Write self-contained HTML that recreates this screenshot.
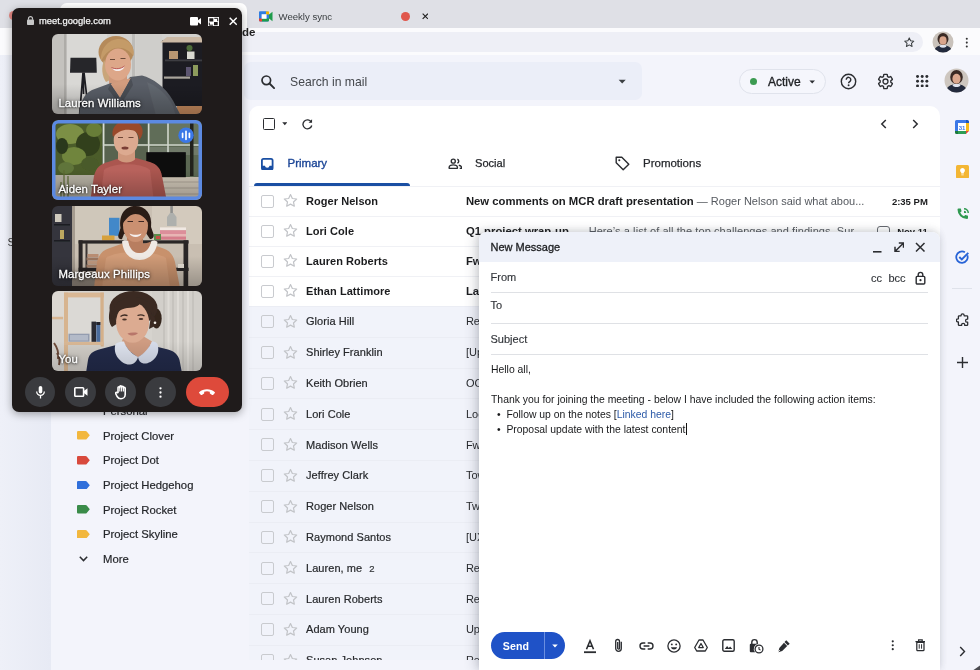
<!DOCTYPE html>
<html lang="en">
<head>
<meta charset="utf-8">
<title>Inbox</title>
<style>
*{box-sizing:border-box;margin:0;padding:0}
html,body{width:980px;height:670px;overflow:hidden;background:#f3f4fb;font-family:"Liberation Sans",sans-serif;color:#1f1f1f}
.abs{position:absolute}
#root{position:relative;width:980px;height:670px;overflow:hidden;will-change:transform;border-radius:.01px}
/* chrome */
#tabstrip{left:0;top:0;width:980px;height:28px;background:#dfe0e6}
#urlrow{left:0;top:28px;width:980px;height:27px;background:#fbfbfd}
#omni{left:100px;top:32.300px;width:822.500px;height:19.700px;background:#eeeff6;border-radius:10px}
#tabtxt{left:278.5px;top:10px;font-size:9.6px;line-height:14px;color:#3c4043;white-space:nowrap}
/* gmail header */
#ghead{left:0;top:55px;width:980px;height:51px;background:#f3f4fb}
#search{left:244px;top:62px;width:398px;height:37.500px;border-radius:7px;background:#ebeef8}
#searchtxt{left:290px;top:75px;font-size:12.2px;line-height:15px;color:#44474c;white-space:nowrap}
#active{left:739px;top:69px;width:87px;height:25px;border:1px solid #e0e3ec;border-radius:13px;background:#f5f6fc}
#activetxt{left:768px;top:74.5px;font-size:12px;line-height:14px;color:#1f2124;-webkit-text-stroke:.35px #1f2124}
/* left strip & sidebar */
#lstrip{left:0;top:55px;width:51px;height:615px;background:linear-gradient(90deg,#eef0f8,#e7eaf4)}
#sidebar{left:51px;top:55px;width:196px;height:615px;background:#f3f4fb}
.lbl{left:103px;font-size:11.3px;-webkit-text-stroke:.2px #25272b;color:#25272b;line-height:14px;white-space:nowrap}
.tag{left:77px;width:13px;height:10px}
/* main card */
#card{left:248.5px;top:106px;width:691.800px;height:564px;background:#fff;border-radius:10px 10px 0 0;overflow:hidden}
.tabtxt{font-size:11.5px;color:#26282c;top:155.800px;line-height:14px;white-space:nowrap;-webkit-text-stroke:.25px #26282c}
.row{left:248.5px;width:691.800px;border-top:1px solid #f0f1f5}
.row.u{background:#fff;height:30px}
.row.r{background:#f1f3fa;height:30.8px;border-top:1px solid #ebedf4}
.row .cb{position:absolute;left:12px;top:50%;margin-top:-6.600px;width:13px;height:13px;border:1.400px solid #c9cbcf;border-radius:2px}
.row svg.st{position:absolute;left:33px;top:50%;margin-top:-9.200px}
.row .nm{position:absolute;left:57.500px;-webkit-text-stroke:.2px #27292c;top:50%;margin-top:-7.5px;font-size:11px;line-height:15px;white-space:nowrap;color:#27292c;letter-spacing:.05px}
.row .nm i{font-style:normal;font-size:9.5px;margin-left:4px;color:#3c4043}
.row .sj{position:absolute;left:217.400px;top:50%;margin-top:-7.5px;font-size:11px;line-height:15px;white-space:nowrap;color:#27292c}
.row .tm{position:absolute;right:12.5px;top:50%;margin-top:-7px;font-size:9.5px;line-height:14px;white-space:nowrap;color:#444}
.row.u .nm,.row.u .sj b,.row.u .tm{font-weight:bold;color:#1b1c1e;-webkit-text-stroke:0}
.row.u .sj b{font-size:11.3px}
.row .sj span{color:#55595f;font-size:11px}
/* compose */
#compose{left:479px;top:232px;width:461.300px;height:438px;background:#fff;border-radius:8px 8px 0 0;box-shadow:-4px 0 12px rgba(60,64,80,.2),0 -1px 7px rgba(60,64,80,.14);overflow:hidden}
#chead{left:0;top:0;width:462px;height:30px;background:#eef1f9}
.ctx{left:11.5px;font-size:11px;color:#33363b;-webkit-text-stroke:.15px #33363b;line-height:14px;white-space:nowrap}
.cline{left:12px;width:437px;height:1px;background:#dfe1e5}
.body{left:12px;font-size:10.4px;color:#17181a;line-height:14px;white-space:nowrap}
/* right rail */
#rail{left:940.300px;top:106px;width:39.700px;height:564px;background:#f3f4fb}
/* meet */
#meet{left:11.5px;top:8.3px;width:230.6px;height:404.2px;background:#1f1b1b;border-radius:7px;box-shadow:0 2px 8px rgba(0,0,0,.35);overflow:hidden}
.tile{left:40.5px;width:150px;height:80px;border-radius:6px;overflow:hidden}
.tname{position:absolute;left:6.400px;bottom:4.400px;font-size:11.400px;line-height:14px;-webkit-text-stroke:.3px #fff;color:#fff;text-shadow:0 0 4px rgba(0,0,0,.75),0 0 2px rgba(0,0,0,.6),0 1px 2px rgba(0,0,0,.5);white-space:nowrap;letter-spacing:.1px}
.cbtn{top:369px;width:32px;height:32px;border-radius:16px;background:#393b3f}
</style>
</head>
<body>
<div id="root">
<!--CHROME-->
<div id="tabstrip" class="abs"></div>
<div class="abs" style="left:60px;top:3px;width:187px;height:26px;background:#fff;border-radius:7px 7px 0 0"></div>
<div class="abs" style="left:8.500px;top:10.500px;width:9px;height:9px;border-radius:5px;background:#e8645a;opacity:.7"></div>
<div id="urlrow" class="abs"></div>
<div id="omni" class="abs"></div>
<div class="abs" style="left:242px;top:25px;font-size:11.5px;font-weight:bold;color:#222;line-height:14px">de</div>
<svg class="abs" style="left:259px;top:9.800px" width="14" height="13" viewBox="0 0 14 13"><rect x="0" y="1.5" width="10" height="10" rx="1.5" fill="#2f7de1"/><path d="M0 1.5h7v3H0z" fill="#2f7de1"/><path d="M7 1.5h3v3H7z" fill="#f0b400"/><path d="M0 8.5h3v3H1.5A1.5 1.5 0 010 10z" fill="#e94335"/><path d="M3 8.5h7v1.5a1.500 1.500 0 01-1.500 1.500H3z" fill="#1e9c4b"/><rect x="2.600" y="4.200" width="5" height="4.600" fill="#fff"/><path d="M10 4.500l3.500-2.800v9.600L10 8.500z" fill="#1e9c4b"/></svg>
<div id="tabtxt" class="abs">Weekly sync</div>
<div class="abs" style="left:401px;top:12px;width:9.200px;height:9.200px;border-radius:5px;background:#e0574c"></div>
<svg class="abs" style="left:421.500px;top:13.300px" width="6.600" height="6.600" viewBox="0 0 8 8"><path d="M.8.800l6.400 6.400M7.200.800L.8 7.200" stroke="#222" stroke-width="1.400"/></svg>
<svg class="abs" style="left:902.500px;top:36px" width="12.500" height="12.500" viewBox="0 0 24 24"><path d="M12 3.600l2.600 5.600 6.100.7-4.500 4.200 1.200 6-5.400-3-5.400 3 1.200-6-4.500-4.200 6.100-.7z" fill="none" stroke="#3c4043" stroke-width="2" stroke-linejoin="round"/></svg>
<svg class="abs" style="left:932px;top:31px" width="22" height="22" viewBox="0 0 22 22"><defs><clipPath id="av1"><circle cx="11" cy="11" r="10.500"/></clipPath></defs><g clip-path="url(#av1)"><rect width="22" height="22" fill="#c9c2bb"/><ellipse cx="11" cy="8" rx="5.500" ry="6" fill="#3a2a25"/><ellipse cx="11" cy="9.500" rx="3.600" ry="4.300" fill="#d9a58c"/><path d="M2 22c0-6 4-7.500 9-7.500s9 1.500 9 7.500z" fill="#232a3d"/><path d="M7.500 15.500c1 .8 2.200 1.200 3.500 1.200s2.500-.4 3.500-1.200l-1-1.500h-5z" fill="#dfe3ee"/></g></svg>
<svg class="abs" style="left:964.700px;top:37px" width="3.600" height="11.200" viewBox="0 0 4 13"><circle cx="2" cy="2" r="1.200" fill="#333"/><circle cx="2" cy="6.500" r="1.200" fill="#333"/><circle cx="2" cy="11" r="1.200" fill="#333"/></svg>
<!--GHEAD-->
<div id="ghead" class="abs"></div>
<div id="lstrip" class="abs"></div>
<div id="sidebar" class="abs"></div>
<div id="search" class="abs"></div>
<svg class="abs" style="left:260px;top:74px" width="16" height="16" viewBox="0 0 16 16"><circle cx="6.300" cy="6.300" r="4.300" fill="none" stroke="#2b2d31" stroke-width="1.700"/><path d="M9.500 9.500l4.600 4.600" stroke="#2b2d31" stroke-width="1.900" stroke-linecap="round"/></svg>
<div id="searchtxt" class="abs">Search in mail</div>
<svg class="abs" style="left:618px;top:78.800px" width="8.400" height="5.200" viewBox="0 0 10 6"><path d="M.8.800h8.400L5 5.300z" fill="#3c4043"/></svg>
<div id="active" class="abs"></div>
<div class="abs" style="left:750px;top:78px;width:7px;height:7px;border-radius:4px;background:#3c9b52"></div>
<div id="activetxt" class="abs">Active</div>
<svg class="abs" style="left:809px;top:79.800px" width="6.400" height="4" viewBox="0 0 8 5"><path d="M.5.500h7L4 4.500z" fill="#2b2d31"/></svg>
<svg class="abs" style="left:840px;top:73px" width="17" height="17" viewBox="0 0 17 17"><circle cx="8.500" cy="8.500" r="7.200" fill="none" stroke="#2b2d31" stroke-width="1.400"/><path d="M6.300 6.800a2.250 2.250 0 114.400.400c0 1.300-2.100 1.500-2.100 3" fill="none" stroke="#2b2d31" stroke-width="1.400"/><circle cx="8.600" cy="12.300" r=".95" fill="#2b2d31"/></svg>
<svg class="abs" style="left:877px;top:72.500px" width="17" height="17" viewBox="0 0 24 24"><path d="M19.430 12.980c.04-.32.070-.64.070-.98s-.03-.66-.07-.98l2.110-1.650a.5.500 0 00.120-.64l-2-3.460a.5.500 0 00-.61-.22l-2.490 1a7.300 7.300 0 00-1.690-.98l-.38-2.650A.49.490 0 0014 2h-4a.49.490 0 00-.49.420l-.38 2.650c-.61.250-1.170.59-1.690.98l-2.490-1a.5.500 0 00-.61.220l-2 3.460a.5.500 0 00.120.64l2.110 1.650c-.04.320-.07.650-.07.980s.03.660.07.980l-2.110 1.650a.5.500 0 00-.12.640l2 3.460c.12.220.39.300.61.220l2.490-1c.52.400 1.080.73 1.690.98l.38 2.650c.03.240.24.420.49.420h4c.25 0 .46-.18.490-.42l.38-2.650a7.300 7.300 0 001.690-.98l2.490 1c.23.090.49 0 .61-.22l2-3.460a.5.500 0 00-.12-.64zM12 15.500a3.500 3.500 0 110-7 3.500 3.500 0 010 7z" fill="none" stroke="#2b2d31" stroke-width="1.900" stroke-linejoin="round"/></svg>
<svg class="abs" style="left:916.200px;top:75px" width="12.400" height="12.400" viewBox="0 0 13 13"><g fill="#2b2d31"><circle cx="1.6" cy="1.6" r="1.550"/><circle cx="6.5" cy="1.6" r="1.550"/><circle cx="11.4" cy="1.6" r="1.550"/><circle cx="1.6" cy="6.5" r="1.550"/><circle cx="6.5" cy="6.5" r="1.550"/><circle cx="11.4" cy="6.5" r="1.550"/><circle cx="1.6" cy="11.4" r="1.550"/><circle cx="6.5" cy="11.4" r="1.550"/><circle cx="11.4" cy="11.4" r="1.550"/></g></svg>
<svg class="abs" style="left:944px;top:68px" width="25" height="25" viewBox="0 0 25 25"><defs><clipPath id="av2"><circle cx="12.500" cy="12.500" r="12"/></clipPath></defs><g clip-path="url(#av2)"><rect width="25" height="25" fill="#cdc6bf"/><ellipse cx="12.500" cy="9" rx="6.300" ry="7" fill="#3a2a25"/><ellipse cx="12.500" cy="10.800" rx="4.100" ry="5" fill="#dba88f"/><path d="M2 25c0-7 4.500-8.500 10.500-8.500S23 18 23 25z" fill="#232a3d"/><path d="M8.500 17.700c1.100.9 2.500 1.400 4 1.400s2.900-.5 4-1.400l-1.200-1.700h-5.600z" fill="#dfe3ee"/></g></svg>
<!--SIDEBAR-->
<div class="abs" style="left:7.500px;top:235px;font-size:11px;color:#333;line-height:14px">S</div>
<div class="abs lbl" style="top:403.7px">Personal</div>
<svg class="abs" style="left:76.600px;top:431.2px" width="13" height="8.600" viewBox="0 0 13.5 10" preserveAspectRatio="none"><path d="M1.200 0h7.600a1.600 1.600 0 011.300.700L13.300 5l-3.200 4.300a1.600 1.600 0 01-1.300.700H1.200A1.200 1.200 0 010 8.800V1.200A1.200 1.200 0 011.200 0z" fill="#f2b73e"/></svg>
<div class="abs lbl" style="top:428.5px">Project Clover</div>
<svg class="abs" style="left:76.600px;top:456px" width="13" height="8.600" viewBox="0 0 13.5 10" preserveAspectRatio="none"><path d="M1.200 0h7.600a1.600 1.600 0 011.300.700L13.300 5l-3.200 4.300a1.600 1.600 0 01-1.300.700H1.200A1.200 1.200 0 010 8.800V1.200A1.200 1.200 0 011.200 0z" fill="#d8493c"/></svg>
<div class="abs lbl" style="top:453.3px">Project Dot</div>
<svg class="abs" style="left:76.600px;top:480.6px" width="13" height="8.600" viewBox="0 0 13.5 10" preserveAspectRatio="none"><path d="M1.200 0h7.600a1.600 1.600 0 011.300.700L13.300 5l-3.200 4.300a1.600 1.600 0 01-1.300.700H1.200A1.200 1.200 0 010 8.800V1.200A1.200 1.200 0 011.200 0z" fill="#2f6fdb"/></svg>
<div class="abs lbl" style="top:477.9px">Project Hedgehog</div>
<svg class="abs" style="left:76.600px;top:505.2px" width="13" height="8.600" viewBox="0 0 13.5 10" preserveAspectRatio="none"><path d="M1.200 0h7.600a1.600 1.600 0 011.300.700L13.300 5l-3.200 4.300a1.600 1.600 0 01-1.300.700H1.200A1.200 1.200 0 010 8.800V1.200A1.200 1.200 0 011.200 0z" fill="#3a8b49"/></svg>
<div class="abs lbl" style="top:502.5px">Project Rocket</div>
<svg class="abs" style="left:76.600px;top:529.9px" width="13" height="8.600" viewBox="0 0 13.5 10" preserveAspectRatio="none"><path d="M1.200 0h7.600a1.600 1.600 0 011.300.700L13.300 5l-3.200 4.300a1.600 1.600 0 01-1.300.700H1.200A1.200 1.200 0 010 8.800V1.200A1.200 1.200 0 011.200 0z" fill="#f2b73e"/></svg>
<div class="abs lbl" style="top:527.2px">Project Skyline</div>
<svg class="abs" style="left:78.5px;top:555.8px" width="9" height="6" viewBox="0 0 9 6"><path d="M.8.800L4.500 4.600 8.200.800" fill="none" stroke="#2b2d31" stroke-width="1.500"/></svg>
<div class="abs lbl" style="top:551.8px">More</div>
<!--CARD-->
<div id="card" class="abs"></div>
<div class="abs" style="left:262.500px;top:118.200px;width:12px;height:12px;border:1.700px solid #2b2d31;border-radius:1.500px"></div>
<svg class="abs" style="left:281.500px;top:122.300px" width="5.600" height="3.400" viewBox="0 0 7 4"><path d="M.3.300h6.400L3.500 3.800z" fill="#2b2d31"/></svg>
<svg class="abs" style="left:301.300px;top:117.800px" width="12.600" height="12.600" viewBox="0 0 13 13"><path d="M10.600 4.200A4.600 4.600 0 1011.100 7.700" fill="none" stroke="#2b2d31" stroke-width="1.400"/><path d="M11.400 1.300v3.600H7.800z" fill="#2b2d31"/></svg>
<svg class="abs" style="left:880px;top:119px" width="7" height="10" viewBox="0 0 7 10"><path d="M5.800 1L1.800 5l4 4" fill="none" stroke="#2b2d31" stroke-width="1.500"/></svg>
<svg class="abs" style="left:912px;top:119px" width="7" height="10" viewBox="0 0 7 10"><path d="M1.200 1l4 4-4 4" fill="none" stroke="#2b2d31" stroke-width="1.500"/></svg>
<svg class="abs" style="left:261px;top:157.500px" width="12.500" height="12.500" viewBox="0 0 12.500 12.500"><rect x=".9" y=".9" width="10.700" height="10.700" rx="1.600" fill="none" stroke="#1a4fa3" stroke-width="1.800"/><path d="M1 7.800h2.900a2.400 2.400 0 004.700 0h2.900v3.700H1z" fill="#1a4fa3"/></svg>
<div class="abs tabtxt" style="left:287.500px;color:#1b4596;-webkit-text-stroke:.35px #1b4596">Primary</div>
<div class="abs" style="left:254px;top:183px;width:155.500px;height:3px;background:#1a4fa3;border-radius:3px 3px 0 0"></div>
<svg class="abs" style="left:447.600px;top:158.200px" width="14.600" height="11.400" viewBox="0 0 16 13"><circle cx="5.700" cy="3.600" r="2.300" fill="none" stroke="#2b2d31" stroke-width="1.600"/><path d="M1 11.800v-1.300c0-1.700 3-2.600 4.700-2.600s4.700.9 4.700 2.600v1.300z" fill="none" stroke="#2b2d31" stroke-width="1.600" stroke-linejoin="round"/><path d="M10.300 1.400a2.300 2.300 0 010 4.400M12 8.300c1.500.4 3 1.100 3 2.300v1.200h-2" fill="none" stroke="#2b2d31" stroke-width="1.600"/></svg>
<div class="abs tabtxt" style="left:475px;font-size:11.100px">Social</div>
<svg class="abs" style="left:615px;top:156px" width="15" height="15" viewBox="0 0 15 15"><path d="M1.200 1.200h5.600l7 7-5.600 5.600-7-7z" fill="none" stroke="#2b2d31" stroke-width="1.400" stroke-linejoin="round"/><circle cx="4.300" cy="4.300" r="1.050" fill="#2b2d31"/></svg>
<div class="abs tabtxt" style="left:643px">Promotions</div>
<!--ROWS-->
<div class="abs row u" style="top:186.0px"><div class="cb"></div><svg class="st" width="17" height="17" viewBox="0 0 24 24"><path d="M12 3.6l2.6 5.6 6.1.7-4.5 4.2 1.2 6-5.4-3-5.4 3 1.2-6-4.5-4.2 6.1-.7z" fill="none" stroke="#c2c4c8" stroke-width="1.700" stroke-linejoin="round"/></svg><div class="nm">Roger Nelson</div><div class="sj"><b>New comments on MCR draft presentation</b><span> — Roger Nelson said what abou...</span></div><div class="tm">2:35 PM</div></div>
<div class="abs row u" style="top:216.0px"><div class="cb"></div><svg class="st" width="17" height="17" viewBox="0 0 24 24"><path d="M12 3.6l2.6 5.6 6.1.7-4.5 4.2 1.2 6-5.4-3-5.4 3 1.2-6-4.5-4.2 6.1-.7z" fill="none" stroke="#c2c4c8" stroke-width="1.700" stroke-linejoin="round"/></svg><div class="nm">Lori Cole</div><div class="sj"><b>Q1 project wrap-up</b><span style="letter-spacing:.07px;margin-left:2.500px"> — Here’s a list of all the top challenges and findings. Sur...</span></div><div class="tm">Nov 11</div><div style="position:absolute;left:628px;top:9px;width:13.500px;height:10px;border:1.300px solid #666a70;border-radius:3px"></div></div>
<div class="abs row u" style="top:246.0px"><div class="cb"></div><svg class="st" width="17" height="17" viewBox="0 0 24 24"><path d="M12 3.6l2.6 5.6 6.1.7-4.5 4.2 1.2 6-5.4-3-5.4 3 1.2-6-4.5-4.2 6.1-.7z" fill="none" stroke="#c2c4c8" stroke-width="1.700" stroke-linejoin="round"/></svg><div class="nm">Lauren Roberts</div><div class="sj"><b>Fwd: Client resources for Q3</b></div><div class="tm">Nov 8</div></div>
<div class="abs row u" style="top:276.0px"><div class="cb"></div><svg class="st" width="17" height="17" viewBox="0 0 24 24"><path d="M12 3.6l2.6 5.6 6.1.7-4.5 4.2 1.2 6-5.4-3-5.4 3 1.2-6-4.5-4.2 6.1-.7z" fill="none" stroke="#c2c4c8" stroke-width="1.700" stroke-linejoin="round"/></svg><div class="nm">Ethan Lattimore</div><div class="sj"><b>Last year’s EMEA strategy deck</b></div><div class="tm">Nov 8</div></div>
<div class="abs row r" style="top:306.0px"><div class="cb"></div><svg class="st" width="17" height="17" viewBox="0 0 24 24"><path d="M12 3.6l2.6 5.6 6.1.7-4.5 4.2 1.2 6-5.4-3-5.4 3 1.2-6-4.5-4.2 6.1-.7z" fill="none" stroke="#c2c4c8" stroke-width="1.700" stroke-linejoin="round"/></svg><div class="nm">Gloria Hill</div><div class="sj">Revised organic search numbers</div><div class="tm">Nov 7</div></div>
<div class="abs row r" style="top:336.8px"><div class="cb"></div><svg class="st" width="17" height="17" viewBox="0 0 24 24"><path d="M12 3.6l2.6 5.6 6.1.7-4.5 4.2 1.2 6-5.4-3-5.4 3 1.2-6-4.5-4.2 6.1-.7z" fill="none" stroke="#c2c4c8" stroke-width="1.700" stroke-linejoin="round"/></svg><div class="nm">Shirley Franklin</div><div class="sj">[Updated invitation] Midwest retail sales check-in</div><div class="tm">Nov 7</div></div>
<div class="abs row r" style="top:367.6px"><div class="cb"></div><svg class="st" width="17" height="17" viewBox="0 0 24 24"><path d="M12 3.6l2.6 5.6 6.1.7-4.5 4.2 1.2 6-5.4-3-5.4 3 1.2-6-4.5-4.2 6.1-.7z" fill="none" stroke="#c2c4c8" stroke-width="1.700" stroke-linejoin="round"/></svg><div class="nm">Keith Obrien</div><div class="sj">OOO next week</div><div class="tm">Nov 7</div></div>
<div class="abs row r" style="top:398.4px"><div class="cb"></div><svg class="st" width="17" height="17" viewBox="0 0 24 24"><path d="M12 3.6l2.6 5.6 6.1.7-4.5 4.2 1.2 6-5.4-3-5.4 3 1.2-6-4.5-4.2 6.1-.7z" fill="none" stroke="#c2c4c8" stroke-width="1.700" stroke-linejoin="round"/></svg><div class="nm">Lori Cole</div><div class="sj">Logo redesign ideas</div><div class="tm">Nov 7</div></div>
<div class="abs row r" style="top:429.2px"><div class="cb"></div><svg class="st" width="17" height="17" viewBox="0 0 24 24"><path d="M12 3.6l2.6 5.6 6.1.7-4.5 4.2 1.2 6-5.4-3-5.4 3 1.2-6-4.5-4.2 6.1-.7z" fill="none" stroke="#c2c4c8" stroke-width="1.700" stroke-linejoin="round"/></svg><div class="nm">Madison Wells</div><div class="sj">Fwd: Feedback on the new signup experience</div><div class="tm">Nov 6</div></div>
<div class="abs row r" style="top:460.0px"><div class="cb"></div><svg class="st" width="17" height="17" viewBox="0 0 24 24"><path d="M12 3.6l2.6 5.6 6.1.7-4.5 4.2 1.2 6-5.4-3-5.4 3 1.2-6-4.5-4.2 6.1-.7z" fill="none" stroke="#c2c4c8" stroke-width="1.700" stroke-linejoin="round"/></svg><div class="nm">Jeffrey Clark</div><div class="sj">Town hall on the upcoming merger</div><div class="tm">Nov 6</div></div>
<div class="abs row r" style="top:490.8px"><div class="cb"></div><svg class="st" width="17" height="17" viewBox="0 0 24 24"><path d="M12 3.6l2.6 5.6 6.1.7-4.5 4.2 1.2 6-5.4-3-5.4 3 1.2-6-4.5-4.2 6.1-.7z" fill="none" stroke="#c2c4c8" stroke-width="1.700" stroke-linejoin="round"/></svg><div class="nm">Roger Nelson</div><div class="sj">Two pics from the conference</div><div class="tm">Nov 6</div></div>
<div class="abs row r" style="top:521.6px"><div class="cb"></div><svg class="st" width="17" height="17" viewBox="0 0 24 24"><path d="M12 3.6l2.6 5.6 6.1.7-4.5 4.2 1.2 6-5.4-3-5.4 3 1.2-6-4.5-4.2 6.1-.7z" fill="none" stroke="#c2c4c8" stroke-width="1.700" stroke-linejoin="round"/></svg><div class="nm">Raymond Santos</div><div class="sj">[UX] Special delivery! This month’s research report!</div><div class="tm">Nov 5</div></div>
<div class="abs row r" style="top:552.4px"><div class="cb"></div><svg class="st" width="17" height="17" viewBox="0 0 24 24"><path d="M12 3.6l2.6 5.6 6.1.7-4.5 4.2 1.2 6-5.4-3-5.4 3 1.2-6-4.5-4.2 6.1-.7z" fill="none" stroke="#c2c4c8" stroke-width="1.700" stroke-linejoin="round"/></svg><div class="nm">Lauren, me <i>2</i></div><div class="sj">Re: Project Skylight 1-pager</div><div class="tm">Nov 5</div></div>
<div class="abs row r" style="top:583.2px"><div class="cb"></div><svg class="st" width="17" height="17" viewBox="0 0 24 24"><path d="M12 3.6l2.6 5.6 6.1.7-4.5 4.2 1.2 6-5.4-3-5.4 3 1.2-6-4.5-4.2 6.1-.7z" fill="none" stroke="#c2c4c8" stroke-width="1.700" stroke-linejoin="round"/></svg><div class="nm">Lauren Roberts</div><div class="sj">Re: Corp strategy slides?</div><div class="tm">Nov 5</div></div>
<div class="abs row r" style="top:614.0px"><div class="cb"></div><svg class="st" width="17" height="17" viewBox="0 0 24 24"><path d="M12 3.6l2.6 5.6 6.1.7-4.5 4.2 1.2 6-5.4-3-5.4 3 1.2-6-4.5-4.2 6.1-.7z" fill="none" stroke="#c2c4c8" stroke-width="1.700" stroke-linejoin="round"/></svg><div class="nm">Adam Young</div><div class="sj">Updated expense report template</div><div class="tm">Nov 4</div></div>
<div class="abs row r" style="top:644.8px"><div class="cb"></div><svg class="st" width="17" height="17" viewBox="0 0 24 24"><path d="M12 3.6l2.6 5.6 6.1.7-4.5 4.2 1.2 6-5.4-3-5.4 3 1.2-6-4.5-4.2 6.1-.7z" fill="none" stroke="#c2c4c8" stroke-width="1.700" stroke-linejoin="round"/></svg><div class="nm">Susan Johnson</div><div class="sj">Referrals from Sydney - need input</div><div class="tm">Nov 4</div></div>
<!--/ROWS-->
<div class="abs" style="left:51px;top:660.300px;width:890px;height:10px;background:#f3f4fb"></div>
<!--RAIL-->
<div id="rail" class="abs"></div>
<svg class="abs" style="left:955.3px;top:120.400px" width="14" height="14" viewBox="0 0 14 14"><rect x="0" y="0" width="14" height="14" rx="1.500" fill="#fff"/><path d="M0 1.500A1.500 1.500 0 011.500 0H11v3H3v8H0z" fill="#3b78e7"/><path d="M11 0h1.500A1.500 1.500 0 0114 1.500V3h-3z" fill="#1a56c4"/><path d="M11 3h3v8h-3z" fill="#f5ba18"/><path d="M3 11h8v3H3z" fill="#2e9d54"/><path d="M0 11h3v3H1.500A1.500 1.500 0 010 12.500z" fill="#1c7a3d"/><path d="M11 11h3l-3 3z" fill="#e24b3c"/><text x="7" y="9.600" font-family="Liberation Sans,sans-serif" font-size="6" font-weight="bold" fill="#3b78e7" text-anchor="middle">31</text></svg>
<svg class="abs" style="left:955.8px;top:164.600px" width="13" height="13.5" viewBox="0 0 13 13.5"><rect width="13" height="13.500" rx="1.500" fill="#f3b634"/><path d="M6.500 3a2.500 2.500 0 00-1.300 4.600v1h2.600v-1A2.500 2.500 0 006.500 3zM5.300 9.400h2.400v.9H5.300z" fill="#fff"/></svg>
<svg class="abs" style="left:955.5px;top:206.5px" width="14" height="14" viewBox="0 0 14 14"><path d="M2.500 1.500h2.300l.8 2.800-1.400 1.200a8 8 0 003.800 3.800l1.200-1.400 2.800.8v2.300a1 1 0 01-1 1A9.500 9.500 0 011.500 2.500a1 1 0 011-1z" fill="#2f9950"/><path d="M8 1a5 5 0 015 5h-1.500A3.500 3.500 0 008 2.500zM8 3.700A2.300 2.300 0 0110.300 6H8z" fill="#2f9950"/></svg>
<svg class="abs" style="left:955.3px;top:249.600px" width="14.5" height="14.5" viewBox="0 0 14.5 14.5"><path d="M12.300 5.200a5.700 5.700 0 11-2.400-2.900" fill="none" stroke="#2763d6" stroke-width="1.800"/><path d="M4.300 7l2.500 2.500L13.300 2.800" fill="none" stroke="#2763d6" stroke-width="1.900"/></svg>
<div class="abs" style="left:952px;top:288px;width:20px;height:1px;background:#dfe2ea"></div>
<svg class="abs" style="left:955.500px;top:313px" width="13.800" height="13.800" viewBox="0 0 15 15"><path d="M5.500 2.600a1.700 1.700 0 013.400 0v.500h3a.8.800 0 01.800.800v2.700h-.6a1.700 1.700 0 000 3.400h.6v2.700a.8.800 0 01-.8.800H9.500v-.6a1.700 1.700 0 00-3.400 0v.6H3.400a.8.800 0 01-.8-.8v-3h-.500a1.700 1.700 0 010-3.400h.500V3.900a.8.800 0 01.800-.8h2.100z" fill="none" stroke="#2b2d31" stroke-width="1.400" stroke-linejoin="round"/></svg>
<svg class="abs" style="left:957px;top:356.800px" width="11" height="11" viewBox="0 0 11 11"><path d="M5.500 0v11M0 5.500h11" stroke="#2b2d31" stroke-width="1.400"/></svg>
<svg class="abs" style="left:959px;top:646px" width="7" height="11" viewBox="0 0 7 11"><path d="M1.200 1l4.300 4.500-4.300 4.500" fill="none" stroke="#2b2d31" stroke-width="1.400"/></svg>
<svg class="abs" style="left:972px;top:664px" width="8" height="6" viewBox="0 0 8 6"><path d="M8 1.500L1.500 6H8z" fill="#4a4a4f"/></svg>
<!--COMPOSE-->
<div id="compose" class="abs">
<div id="chead" class="abs"></div>
<div class="abs ctx" style="top:8px;color:#202225;-webkit-text-stroke:.3px #202225">New Message</div>
<svg class="abs" style="left:394px;top:18.5px" width="8.5" height="2" viewBox="0 0 8.5 2"><rect width="8.5" height="1.6" fill="#2b2d31"/></svg>
<svg class="abs" style="left:414.5px;top:9.5px" width="10.5" height="10.5" viewBox="0 0 10.5 10.5"><path d="M1.2 9.300L9.300 1.200M4.800 1h4.700v4.700M5.700 9.500H1V4.800" fill="none" stroke="#2b2d31" stroke-width="1.500"/></svg>
<svg class="abs" style="left:436px;top:9.5px" width="10.5" height="10.5" viewBox="0 0 10.5 10.5"><path d="M1 1l8.500 8.500M9.500 1L1 9.500" stroke="#2b2d31" stroke-width="1.500"/></svg>
<div class="abs ctx" style="top:38px">From</div>
<div class="abs ctx" style="left:392px;top:38.500px">cc</div>
<div class="abs ctx" style="left:409.500px;top:38.500px">bcc</div>
<svg class="abs" style="left:436px;top:38.5px" width="11" height="14" viewBox="0 0 11 14"><rect x="1.2" y="5.400" width="8.600" height="7.600" rx="1" fill="none" stroke="#2b2d31" stroke-width="1.400"/><path d="M3.200 5.400V3.700a2.300 2.300 0 014.600 0v1.700" fill="none" stroke="#2b2d31" stroke-width="1.400"/><circle cx="5.500" cy="9.200" r="1.100" fill="#2b2d31"/></svg>
<div class="abs cline" style="top:60px"></div>
<div class="abs ctx" style="top:65.700px">To</div>
<div class="abs cline" style="top:91px"></div>
<div class="abs ctx" style="top:99.500px">Subject</div>
<div class="abs cline" style="top:122px"></div>
<div class="abs body" style="top:130.500px">Hello all,</div>
<div class="abs body" style="top:160.500px">Thank you for joining the meeting - below I have included the following action items:</div>
<div class="abs body" style="left:18px;top:175.500px">•&nbsp; Follow up on the notes [<span style="color:#2c5aa8">Linked here</span>]</div>
<div class="abs body" style="left:18px;top:190.500px">•&nbsp; Proposal update with the latest content<span style="display:inline-block;width:1px;height:12px;background:#111;vertical-align:-2px;margin-left:1px"></span></div>
<div class="abs" style="left:11.5px;top:399.800px;width:74px;height:27.300px;border-radius:14px;background:#1f52c7"></div>
<div class="abs" style="left:64.5px;top:399.800px;width:1px;height:27.300px;background:#6a8ee0"></div>
<div class="abs" style="left:23.800px;top:406.500px;font-size:10.600px;line-height:14px;font-weight:bold;color:#fff;letter-spacing:.1px">Send</div>
<svg class="abs" style="left:72.5px;top:412px" width="6" height="4" viewBox="0 0 6 4"><path d="M.2.400h5.600L3 3.600z" fill="#fff"/></svg>
<svg class="abs" style="left:105px;top:405.6px" width="12" height="16" viewBox="0 0 12 16"><path d="M2.500 11.200L6 2.800l3.500 8.400M3.700 8.300h4.600" fill="none" stroke="#2b2d31" stroke-width="1.600"/><rect x="0" y="13.300" width="12" height="1.800" fill="#2b2d31"/></svg>
<svg class="abs" style="left:134.5px;top:406.1px" width="9" height="15" viewBox="0 0 9 15"><path d="M7.300 3.800v6.700a2.800 2.800 0 01-5.600 0V3.400a1.900 1.900 0 013.800 0v6.800a.9.900 0 01-1.800 0V4" fill="none" stroke="#2b2d31" stroke-width="1.300"/></svg>
<svg class="abs" style="left:159.5px;top:409.6px" width="15" height="8" viewBox="0 0 15 8"><path d="M6.300 1H4a3 3 0 000 6h2.300M8.700 1H11a3 3 0 010 6H8.700M4.600 4h5.800" fill="none" stroke="#2b2d31" stroke-width="1.400"/></svg>
<svg class="abs" style="left:188px;top:406.6px" width="14" height="14" viewBox="0 0 14 14"><circle cx="7" cy="7" r="6.100" fill="none" stroke="#2b2d31" stroke-width="1.300"/><circle cx="4.800" cy="5.400" r=".95" fill="#2b2d31"/><circle cx="9.200" cy="5.400" r=".95" fill="#2b2d31"/><path d="M3.800 8.200a3.400 3.400 0 006.400 0z" fill="#2b2d31"/></svg>
<svg class="abs" style="left:215px;top:407.1px" width="14" height="13" viewBox="0 0 14 13"><path d="M5 1h4l4.300 7.500-2 3.500H2.700l-2-3.500z" fill="none" stroke="#2b2d31" stroke-width="1.300" stroke-linejoin="round"/><path d="M7 4.500L9.300 8.600H4.700z" fill="none" stroke="#2b2d31" stroke-width="1.200" stroke-linejoin="round"/></svg>
<svg class="abs" style="left:243px;top:407.1px" width="13" height="13" viewBox="0 0 13 13"><rect x=".8" y=".8" width="11.400" height="11.400" rx="1.500" fill="none" stroke="#2b2d31" stroke-width="1.400"/><path d="M2.800 10l2.300-3 1.700 2.100 1.300-1.500 2.200 2.400z" fill="#2b2d31"/></svg>
<svg class="abs" style="left:270px;top:405.6px" width="15" height="16" viewBox="0 0 15 16"><path d="M2.800 6V4.300a2.700 2.700 0 015.400 0V6" fill="none" stroke="#2b2d31" stroke-width="1.400"/><path d="M1.800 5.800h7.600a5 5 0 00-3.300 8.400H1.800a1 1 0 01-1-1V6.800a1 1 0 011-1z" fill="#2b2d31"/><circle cx="10" cy="11" r="3.900" fill="none" stroke="#2b2d31" stroke-width="1.300"/><path d="M10 9v2.200l1.500.9" fill="none" stroke="#2b2d31" stroke-width="1.100"/></svg>
<svg class="abs" style="left:298px;top:406.6px" width="14" height="14" viewBox="0 0 14 14"><path d="M9.300 1.300l3.400 3.400-1.800 1.800L7.500 3.100z" fill="#2b2d31"/><path d="M7 3.800l3.200 3.200-5 5-3.900 1.200 1-4.100z" fill="#2b2d31"/><path d="M1 13l2-2" stroke="#fff" stroke-width=".8"/></svg>
<svg class="abs" style="left:411.700px;top:408.300px" width="3.500" height="10.500" viewBox="0 0 4 12"><circle cx="2" cy="1.500" r="1.250" fill="#2b2d31"/><circle cx="2" cy="6" r="1.250" fill="#2b2d31"/><circle cx="2" cy="10.500" r="1.250" fill="#2b2d31"/></svg>
<svg class="abs" style="left:435.500px;top:407.200px" width="10.800" height="12.600" viewBox="0 0 12 14"><path d="M2 3.800h8v8.200a1 1 0 01-1 1H3a1 1 0 01-1-1z" fill="none" stroke="#2b2d31" stroke-width="1.400"/><path d="M.5 2.800h11M4 2.500V1h4v1.500" fill="none" stroke="#2b2d31" stroke-width="1.400"/><path d="M4.700 5.800v5M7.300 5.800v5" stroke="#2b2d31" stroke-width="1.100"/></svg>
</div>
<!--MEET-->
<div id="meet" class="abs">
<svg class="abs" style="left:15.5px;top:8.2px" width="7" height="9" viewBox="0 0 7 9"><rect x="0" y="3.600" width="7" height="5.400" rx=".8" fill="#c8c8c8"/><path d="M1.500 3.800V2.600a2 2 0 014 0v1.200" fill="none" stroke="#c8c8c8" stroke-width="1.200"/></svg>
<div class="abs" style="left:27.5px;top:6.2px;font-size:9.400px;line-height:14px;color:#f4f4f4;-webkit-text-stroke:.25px #f4f4f4;white-space:nowrap">meet.google.com</div>
<svg class="abs" style="left:178.3px;top:9.2px" width="11.5" height="8.5" viewBox="0 0 11.5 8.5"><rect x="0" y="0" width="8" height="8.500" rx="1" fill="#fff"/><path d="M8 3.200L11.500.600v7.300L8 5.300z" fill="#fff"/></svg>
<svg class="abs" style="left:196.5px;top:8.7px" width="11" height="9.5" viewBox="0 0 11 9.5"><path d="M0 0h11v9.500H0z" fill="#fff"/><path d="M1.300 1.300h4v3.200h-4zM6 5h3.700v3.200H6z" fill="#1f1b1b"/><path d="M6.300 1.300h3.400v2.900M1.300 5.600v2.600h3.800" fill="none" stroke="#1f1b1b" stroke-width="1"/></svg>
<svg class="abs" style="left:217.2px;top:9.2px" width="8.5" height="8.5" viewBox="0 0 8.5 8.5"><path d="M.7.700l7.100 7.100M7.800.700L.7 7.800" stroke="#fff" stroke-width="1.500"/></svg>
<!--TILES-->
<div class="abs tile" style="top:25.7px">
<svg width="150" height="80" viewBox="0 0 150 80" style="display:block">
<defs><filter id="bl" x="-5%" y="-5%" width="110%" height="110%"><feGaussianBlur stdDeviation="0.55"/></filter>
<linearGradient id="shade" x1="0" y1="0" x2="0" y2="1"><stop offset="0" stop-color="#000" stop-opacity="0"/><stop offset="1" stop-color="#000" stop-opacity=".24"/></linearGradient></defs>
<g filter="url(#bl)">
<rect x="-2" y="-2" width="154" height="84" fill="#d2d1ce"/>
<rect x="-2" y="-2" width="14" height="84" fill="#c4c2be"/>
<rect x="12" y="-2" width="2.500" height="84" fill="#aeaca8"/>
<rect x="15" y="-2" width="40" height="84" fill="#d9d8d5"/>
<rect x="80" y="-2" width="3" height="52" fill="#bdbcb9"/>
<rect x="84" y="-2" width="26" height="60" fill="#cfcecb"/>
<path d="M18.500 23.800h25.800l.5 15h-26.800z" fill="#25252a"/>
<path d="M31 38.500L27.500 82M32 38.500L37 82M31.500 38.500V60" stroke="#1c1c20" stroke-width="1.700" fill="none"/>
<rect x="110.500" y="6" width="42" height="66" fill="#1d1d20"/>
<path d="M108 8.500l7-5.500h37v5.500z" fill="#cbb9a5"/>
<rect x="113" y="25.500" width="37" height="1.800" fill="#3d3d42"/>
<rect x="112" y="42.500" width="26" height="2.200" fill="#a9a49c"/>
<rect x="117" y="17" width="9" height="8" fill="#b89672"/>
<rect x="135" y="17.500" width="7.500" height="7.500" fill="#d9d9d2"/>
<circle cx="137.500" cy="14" r="3" fill="#4e6d3a"/>
<rect x="141" y="31" width="5" height="11" fill="#8c9b5b"/>
<rect x="134" y="33" width="5" height="9" fill="#5b5470"/>
<rect x="125" y="72" width="27" height="10" fill="#c98d61"/>
<ellipse cx="64" cy="18" rx="17.500" ry="16" fill="#b58a5a"/>
<path d="M52 26c-3 8-2 16 2 22l8-4z" fill="#c9a57a"/>
<path d="M57 40h18v16H57z" fill="#cf997b"/>
<path d="M27 82c1-14 5-22 13-26l19-7c5 5 13 3 19-6l12-1.500c11 3 23 11 31 25l8 15.500z" fill="#5a5f67"/>
<path d="M58.500 50l9.500 14 11-20z" fill="#d29c7e"/><path d="M58.500 50l9.500 14-3 3-9-12zM79 44l-11 20 3 3 10-16z" fill="#4b4f57"/>
<path d="M95 48c10 4 20 12 26 24l3 10h-20z" fill="#62676f"/>
<ellipse cx="66" cy="30.500" rx="13" ry="16" fill="#dda789"/>
<path d="M49 27c-1-13 8-22 18-22 10 0 16 7 14.500 17-5-7-13-10-21-7-5 2-8.500 6-11.500 12z" fill="#c49b68"/>
<path d="M59.500 33.500c4 2 9.500 1.500 13-1.500-1 6-10 7-13 1.500z" fill="#f6eeee"/>
<path d="M59.500 33.500c4 2 9.500 1.500 13-1.500" stroke="#b8544f" stroke-width="1" fill="none"/>
<path d="M58 25.500h5M68.500 24.500h5" stroke="#6b4a38" stroke-width="1.200"/>
</g>
<rect y="50" width="150" height="30" fill="url(#shade)"/>
</svg>
<div class="tname">Lauren Williams</div>
</div>

<div class="abs tile" style="top:111.7px">
<svg width="150" height="80" viewBox="0 0 150 80" style="display:block">
<g filter="url(#bl)">
<rect x="-2" y="-2" width="154" height="84" fill="#5c6753"/>
<rect x="50" y="-2" width="102" height="28" fill="#66735a"/>
<rect x="53" y="2" width="42" height="22" fill="#4d5a46"/>
<rect x="98" y="2" width="17" height="22" fill="#606d58"/>
<rect x="118" y="2" width="20" height="22" fill="#67745f"/>
<rect x="53" y="27" width="42" height="26" fill="#59634f"/>
<rect x="98" y="27" width="50" height="8" fill="#6f7a69"/>
<rect x="-2" y="-2" width="52" height="60" fill="#4c5c2a"/>
<ellipse cx="18" cy="14" rx="14" ry="10" fill="#7b8f45"/>
<ellipse cx="36" cy="24" rx="12" ry="12" fill="#33401d"/>
<ellipse cx="22" cy="36" rx="12" ry="9" fill="#6f853c"/>
<ellipse cx="42" cy="10" rx="8" ry="7" fill="#687d38"/>
<ellipse cx="10" cy="26" rx="6" ry="8" fill="#2c381a"/>
<ellipse cx="38" cy="44" rx="9" ry="7" fill="#4a5a29"/>
<ellipse cx="14" cy="48" rx="8" ry="6" fill="#61753a"/>
<path d="M51.600 0V54M96.700 0V34M116 0V34" stroke="#d6dbd2" stroke-width="1.500"/>
<path d="M51 25h100" stroke="#cfd5cb" stroke-width="1.600"/>
<rect x="138" y="2" width="3.500" height="54" fill="#20221f"/>
<rect x="-2" y="55" width="50" height="27" fill="#b4afa1"/>
<path d="M12 50v30M16 56v24M9 62v18" stroke="#5b6a33" stroke-width="1.200"/>
<rect x="96" y="57" width="56" height="25" fill="#cdc4b5"/>
<path d="M110 62h40M110 68h40M110 74h40" stroke="#aaa194" stroke-width="1"/>
<rect x="94.300" y="32.200" width="39.500" height="25" fill="#090909"/>
<path d="M38 82l4-26c2-8 6-12 14-14l12-4h16l14 4c7 2 11 7 12 14l5 26z" fill="#ab5650"/>
<path d="M52 50c8-7 36-8 46 0l4 32H48z" fill="#b8625b"/>
<path d="M66 28h17v11.500c-4 4-13 4-17 0z" fill="#cf987d"/>
<ellipse cx="74" cy="20.500" rx="12.300" ry="15" fill="#dcaa90"/>
<path d="M61 17c-2.500-10 5-16.500 15-16.500 9 0 16 4.500 14.500 13-1 3-1.500 5-3.500 6 0-5-3-9.500-8.500-9.500-6.500-1-12 1-17.500 7z" fill="#99482a"/>
<ellipse cx="73" cy="28" rx="3.500" ry="1.500" fill="#7a3d35"/>
<path d="M66 17.500h5M76.500 17.500h5" stroke="#6d4434" stroke-width="1.100"/>
</g>
<rect y="50" width="150" height="30" fill="url(#shade)"/>
<rect x="1.750" y="1.750" width="146.500" height="76.500" rx="4.500" fill="none" stroke="#5c8ae2" stroke-width="3.500"/>
<circle cx="134" cy="15.300" r="7.700" fill="#3b78e7"/>
<path d="M130.600 13.300v4M134 11.300v8M137.400 13.300v4" stroke="#fff" stroke-width="1.700" stroke-linecap="round"/>
</svg>
<div class="tname">Aiden Tayler</div>
</div>

<div class="abs tile" style="top:197.400px">
<svg width="150" height="80" viewBox="0 0 150 80" style="display:block">
<g filter="url(#bl)">
<rect x="-2" y="-2" width="154" height="84" fill="#c9bfb2"/>
<rect x="20" y="-2" width="38" height="40" fill="#cfc7ba"/>
<rect x="100" y="-2" width="52" height="40" fill="#d3cabd"/>
<rect x="-2" y="-2" width="22" height="84" fill="#35363c"/>
<rect x="3" y="8" width="6.500" height="8" fill="#cfcabd"/>
<rect x="2" y="18" width="16" height="1.500" fill="#1d1d20"/>
<rect x="8" y="24" width="4" height="9" fill="#bda860"/>
<rect x="2" y="34" width="16" height="1.500" fill="#1d1d20"/>
<rect x="20" y="-2" width="3" height="84" fill="#a49b8f"/>
<rect x="57" y="11.800" width="10.500" height="18" fill="#4288c9"/>
<rect x="50" y="29.500" width="12.500" height="5" fill="#d6a13e"/>
<rect x="118.300" y="-2" width="2.600" height="10" fill="#8f908e"/>
<path d="M115 20v-9l3-4h3.500l3 4v9z" fill="#aeb0ad"/>
<rect x="108" y="21.400" width="26" height="2.800" fill="#f0e8e2"/>
<rect x="108" y="24.200" width="26" height="3.800" fill="#dc8e9a"/>
<rect x="109" y="28" width="25" height="2.500" fill="#e9b4b4"/>
<rect x="108" y="30.500" width="26" height="3.200" fill="#d67d8b"/>
<rect x="102" y="28" width="7" height="6" fill="#5c8b4b"/>
<rect x="104" y="30" width="4" height="3" fill="#c74d45"/>
<rect x="26.600" y="34.300" width="110" height="3.300" fill="#2a2625"/>
<rect x="26.600" y="34.300" width="4" height="48" fill="#2a2625"/>
<rect x="131.500" y="34.300" width="4.700" height="48" fill="#2a2625"/>
<rect x="33.500" y="37" width="2" height="45" fill="#3b3533"/>
<rect x="26.600" y="61.700" width="110" height="3.300" fill="#2a2625"/>
<rect x="35.500" y="48" width="11" height="3" fill="#b88d72"/>
<rect x="34.500" y="51.500" width="12" height="3" fill="#9c7760"/>
<rect x="35.500" y="55" width="11" height="3" fill="#c09a80"/>
<rect x="34.500" y="58.500" width="12" height="3" fill="#a8826a"/>
<rect x="20" y="66" width="30" height="16" fill="#8d8378"/>
<rect x="126" y="58" width="6" height="4" fill="#e8e1d6"/>
<path d="M68.500 22c-2-14 5-22 15-22 10 0 17 8 15.500 21l2.500 7c1 3-1 5-3.500 5l-4-6-22 1-2 5c-2.500 1-4.500-1.500-3.500-4.500z" fill="#2a1c18"/>
<path d="M75 30h16v11H75z" fill="#b87e61"/>
<path d="M42 82l3-26c2-8 6-12 13-14l14-5c6 12 18 12 24 0l14 5c7 2 11 6 13 14l5 26z" fill="#c8916c"/>
<path d="M54 52c10-8 48-8 60 0l4 30H50z" fill="#d09b77"/>
<path d="M70 35.500c2.500-2 5-1.500 6.500 0 1 7 5 11.500 11 11.500s10-4.500 11.500-11.500c2-1.500 4.500-1.500 6.500.500-1 10-8 18-18 18s-16.500-8-17.500-18.500z" fill="#efe9e4"/>
<path d="M76.500 35.500c1 7 5 11.500 11 11.500s10-4.500 11.500-11.500c-6 3-16 3-22.500 0z" fill="#b87e61"/>
<ellipse cx="83.500" cy="19.500" rx="12.500" ry="16.500" fill="#ca9071"/>
<path d="M70.500 18c-1-11 5-17 13-17s14 6 13 16c-4-6-8-9-13-9s-9 4-13 10z" fill="#2a1c18"/>
<path d="M77.500 27.500c3.500 1.800 8.500 1.800 12 0-1 4.500-10.500 4.500-12 0z" fill="#f5efee"/>
<path d="M75.500 15.500h5.500M86.500 15.500H92" stroke="#3b2620" stroke-width="1.200"/>
</g>
<rect y="50" width="150" height="30" fill="url(#shade)"/>
</svg>
<div class="tname">Margeaux Phillips</div>
</div>

<div class="abs tile" style="top:283px;height:79.300px">
<svg width="150" height="80" viewBox="0 0 150 80" style="display:block">
<g filter="url(#bl)">
<rect x="-2" y="-2" width="154" height="84" fill="#d6d3ce"/>
<rect x="100" y="-2" width="52" height="84" fill="#d2cfca"/>
<path d="M112 0v82M121 0v82M131 0v82M141 0v82" stroke="#c6c3be" stroke-width="2"/>
<path d="M116.500 0v82M126 0v82M136 0v82" stroke="#dedbd6" stroke-width="2"/>
<rect x="16" y="6" width="32.500" height="45" fill="#dbd9d5"/>
<rect x="-2" y="-2" width="14" height="28" fill="#dcd8d2"/>
<rect x="-2" y="25.800" width="13" height="2.500" fill="#d8b692"/>
<rect x="12" y="1.600" width="40" height="4.800" fill="#d9b794"/>
<rect x="12" y="1.600" width="4" height="82" fill="#d7b48f"/>
<rect x="48.400" y="1.600" width="3.300" height="54" fill="#d4b08a"/>
<rect x="12" y="50.800" width="39.700" height="3.300" fill="#d9b794"/>
<rect x="16" y="54.100" width="32.500" height="28" fill="#d1cdc7"/>
<rect x="39.500" y="30.600" width="4.600" height="20.200" fill="#2a2a30"/>
<rect x="44.300" y="31" width="4" height="19.800" fill="#4c6c9c"/>
<rect x="44.300" y="31" width="4" height="3" fill="#23232a"/>
<rect x="16.500" y="42.700" width="21" height="8" fill="#949db0"/>
<rect x="18" y="44" width="18" height="5.500" fill="#b3bac8"/>
<path d="M2 52c3 4 5 10 4 16M5 62c2 3 3 8 2 12" stroke="#6d4b3a" stroke-width="2" fill="none"/>
<ellipse cx="104.500" cy="27.500" rx="5.200" ry="10" fill="#36261f"/>
<ellipse cx="81.500" cy="17" rx="24" ry="17" fill="#3a2a22"/>
<path d="M58 18c-2 8-1 14 2 18l6-4zM100 18l5 16-8 4z" fill="#3a2a22"/>
<path d="M71 44h20v16H71z" fill="#cf9c82"/>
<path d="M34 82l2-13c1-6 5-9 11-10.500l19-5h30l20 5c6 1.500 10 5 11.500 10.500l2.500 13z" fill="#232b49"/>
<path d="M70 50l2-5h19l9 5.500-5 10-9 6-8-6z" fill="#cf9c82"/><path d="M63.500 53c1.500-1.500 5-2.500 8.500-2.500 2 6 7 12 14 15.500-1 4-3.500 7-8 7.500-4 .5-9-2.500-12-6.500-3-4-4-9-2.500-14z" fill="#dde2ee"/><path d="M86 66c6-3 11-9 14-15.500 2 0 4 .5 5.500 2.500 1.500 5 1 10-2 13.500-3 4-8 6.500-12 6-3-.5-5-3-5.500-6.500z" fill="#d6dceb"/>
<ellipse cx="80.600" cy="31.500" rx="16.500" ry="20.200" fill="#dcab91"/>
<path d="M60 28c-1-12 8-22 21-22 12 0 22 8 21 20-3-6-8-11-14-13-3 3-8 4-13 4-6 1-12 5-15 11z" fill="#3a2a22"/>
<path d="M68.500 25.500c2-1.500 5-1.800 7-.8M85.500 24.500c2.500-1 5-.8 7 .5" stroke="#3b2a22" stroke-width="1.300" fill="none"/>
<ellipse cx="72.500" cy="28.500" rx="2.300" ry="1" fill="#4a3228"/>
<ellipse cx="89" cy="28" rx="2.300" ry="1" fill="#4a3228"/>
<path d="M75.500 42.500c3-1.200 7-1.200 10.500-.5-2 3-8 3.500-10.500.5z" fill="#b8766a"/>
<circle cx="103" cy="31.800" r="1.300" fill="#f4f0ea"/>
</g>
<rect y="50" width="150" height="30" fill="url(#shade)" opacity=".6"/>
</svg>
<div class="tname">You</div>
</div>
<!--/TILES-->
<div class="abs" style="left:13.3px;top:368.6px;width:30.600px;height:30.600px;border-radius:16px;background:#3a3b3f"></div>
<div class="abs" style="left:53.7px;top:368.6px;width:30.600px;height:30.600px;border-radius:16px;background:#3a3b3f"></div>
<div class="abs" style="left:93.9px;top:368.6px;width:30.600px;height:30.600px;border-radius:16px;background:#3a3b3f"></div>
<div class="abs" style="left:133.8px;top:368.6px;width:30.600px;height:30.600px;border-radius:16px;background:#3a3b3f"></div>
<div class="abs" style="left:174.4px;top:369.2px;width:42.800px;height:29.400px;border-radius:15px;background:#de4a3b"></div>
<svg class="abs" style="left:24.1px;top:377.4px" width="9" height="13" viewBox="0 0 9 13"><rect x="2.700" y="0" width="3.600" height="7.600" rx="1.800" fill="#fff"/><path d="M.7 5.600a3.800 3.800 0 007.600 0M4.500 9.400V12.500" fill="none" stroke="#fff" stroke-width="1.300"/></svg>
<svg class="abs" style="left:62.0px;top:378.9px" width="14" height="10" viewBox="0 0 14 10"><rect x=".8" y=".8" width="8.800" height="8.400" rx=".8" fill="none" stroke="#fff" stroke-width="1.600"/><path d="M9.800 4L13.500 1.200v7.600L9.800 6z" fill="#fff"/></svg>
<svg class="abs" style="left:103.2px;top:376.4px" width="12" height="15" viewBox="0 0 12 15"><path d="M3 7.500V2.700a.9.900 0 011.800 0V1.800a.9.900 0 011.800 0v.500a.9.900 0 011.800 0v1a.9.900 0 011.800 0v6.200a4.300 4.300 0 01-4.300 4.300c-2 0-3-1-3.800-2.300L.7 8.600a.9.900 0 011.500-.9z" fill="none" stroke="#fff" stroke-width="1.600" stroke-linejoin="round"/><path d="M4.800 3v3.500M6.600 2.500v4M8.400 3.300v3.200" stroke="#fff" stroke-width="1.100"/></svg>
<svg class="abs" style="left:147.6px;top:378.4px" width="3" height="11" viewBox="0 0 3 11"><circle cx="1.500" cy="1.300" r="1.150" fill="#fff"/><circle cx="1.500" cy="5.500" r="1.150" fill="#fff"/><circle cx="1.500" cy="9.700" r="1.150" fill="#fff"/></svg>
<svg class="abs" style="left:187.8px;top:380.9px" width="16" height="6.5" viewBox="0 0 16 6.5"><path d="M8 .3C5 .3 2.300 1.300.4 3a.9.900 0 000 1.300l1.300 1.500c.3.300.8.400 1.200.100l1.800-1.100c.3-.2.500-.5.500-.9V2.700a9 9 0 015.600 0v1.200c0 .4.200.7.500.9l1.800 1.100c.4.300.9.200 1.200-.1l1.300-1.500a.9.900 0 000-1.300C13.700 1.300 11 .3 8 .3z" fill="#fff"/></svg>
</div>
</div>
</body>
</html>
